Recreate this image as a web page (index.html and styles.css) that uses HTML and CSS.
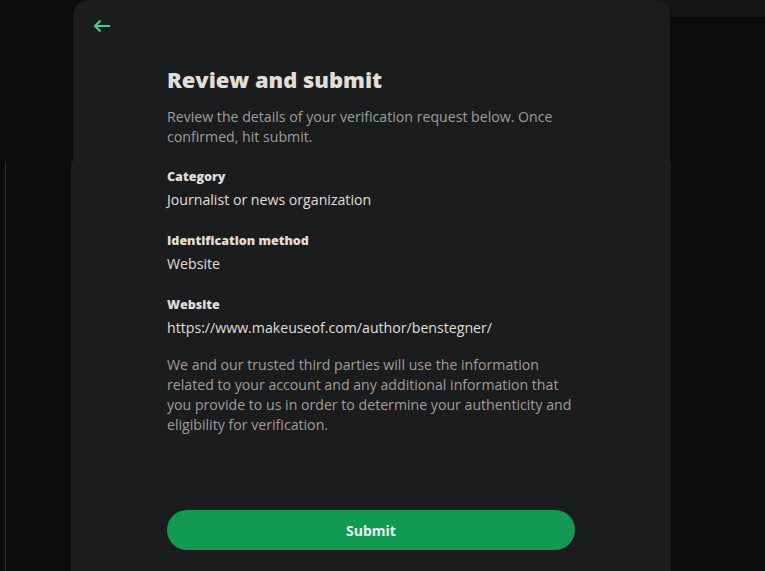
FILE: index.html
```html
<!DOCTYPE html>
<html lang="en">
<head>
<meta charset="utf-8">
<title>Review and submit</title>
<link rel="stylesheet" href="styles.css">
</head>
<body>
<div class="backdrop">
  <div class="top-strip"></div>
  <div class="side-line"></div>
  <div class="under-panel"></div>
</div>
<div class="modal">
  <div class="modal-head">
    <button class="back" aria-label="Back">
      <svg width="18" height="14" viewBox="0 0 18 14" fill="none">
        <path d="M17 7H2.5M7.5 1.5L2 7l5.5 5.5" stroke="#34d98c" stroke-width="2"/>
      </svg>
    </button>
  </div>
  <div class="content">
    <h1 class="title">Review and submit</h1>
    <p class="lead">Review the details of your verification request below. Once confirmed, hit submit.</p>
    <div class="field">
      <div class="label">Category</div>
      <div class="value">Journalist or news organization</div>
    </div>
    <div class="field">
      <div class="label">Identification method</div>
      <div class="value">Website</div>
    </div>
    <div class="field">
      <div class="label">Website</div>
      <div class="value">https://www.makeuseof.com/author/benstegner/</div>
    </div>
    <p class="note">We and our trusted third parties will use the information related to your account and any additional information that you provide to us in order to determine your authenticity and eligibility for verification.</p>
    <button class="submit">Submit</button>
  </div>
</div>
</body>
</html>
```
FILE: styles.css
```css
* { box-sizing: border-box; }
html, body {
  margin: 0;
  height: 100%;
  background: #0b0d0c;
  font-family: "Open Sans", "Noto Sans", sans-serif;
  overflow: hidden;
}
.backdrop { position: absolute; inset: 0; }
.top-strip {
  position: absolute; left: 660px; right: 0; top: 0; height: 17px;
  background: #151717;
}
.side-line {
  position: absolute; left: 5px; top: 162px; bottom: 0; width: 1px;
  background: #2a2c2c;
}
.under-panel {
  position: absolute; left: 71px; top: 162px; bottom: 0; width: 600px;
  background: #1b1c1e;
}
.modal {
  position: absolute;
  left: 73px; top: 0; width: 597px; height: 571px;
  background: #1b1c1e;
  border-radius: 16px 16px 0 0;
}
.modal-head {
  height: 51px;
  padding: 15px 0 0 20px;
}
.back {
  background: none; border: 0; padding: 0; margin: 0;
  width: 20px; height: 22px;
  display: flex; align-items: center; cursor: pointer;
}
.content {
  width: 408px;
  margin-left: 94px;
  display: flex;
  flex-direction: column;
}
.title {
  margin: 13px 0 0;
  font-size: 21.9px;
  font-weight: 800;
  line-height: 32px;
  color: #e2ded7;
  letter-spacing: 0;
}
.lead {
  margin: 11px 0 0;
  font-size: 14.15px;
  line-height: 20px;
  color: #a19c95;
}
.field { margin-top: 20px; }
.field + .field { margin-top: 21px; }
.label {
  font-size: 12.5px;
  font-weight: 800;
  line-height: 20px;
  color: #e2ded7;
}
.value {
  margin-top: 3px;
  font-size: 14.15px;
  line-height: 20px;
  color: #e2ded7;
}
.note {
  margin: 17px 0 0;
  font-size: 14.15px;
  line-height: 20px;
  color: #a19c95;
}
.submit {
  margin-top: 75px;
  height: 40px;
  width: 408px;
  border: 0;
  border-radius: 20px;
  background: #139a52;
  color: #e8f0eb;
  font-family: inherit;
  font-size: 14px;
  font-weight: 700;
}
```
